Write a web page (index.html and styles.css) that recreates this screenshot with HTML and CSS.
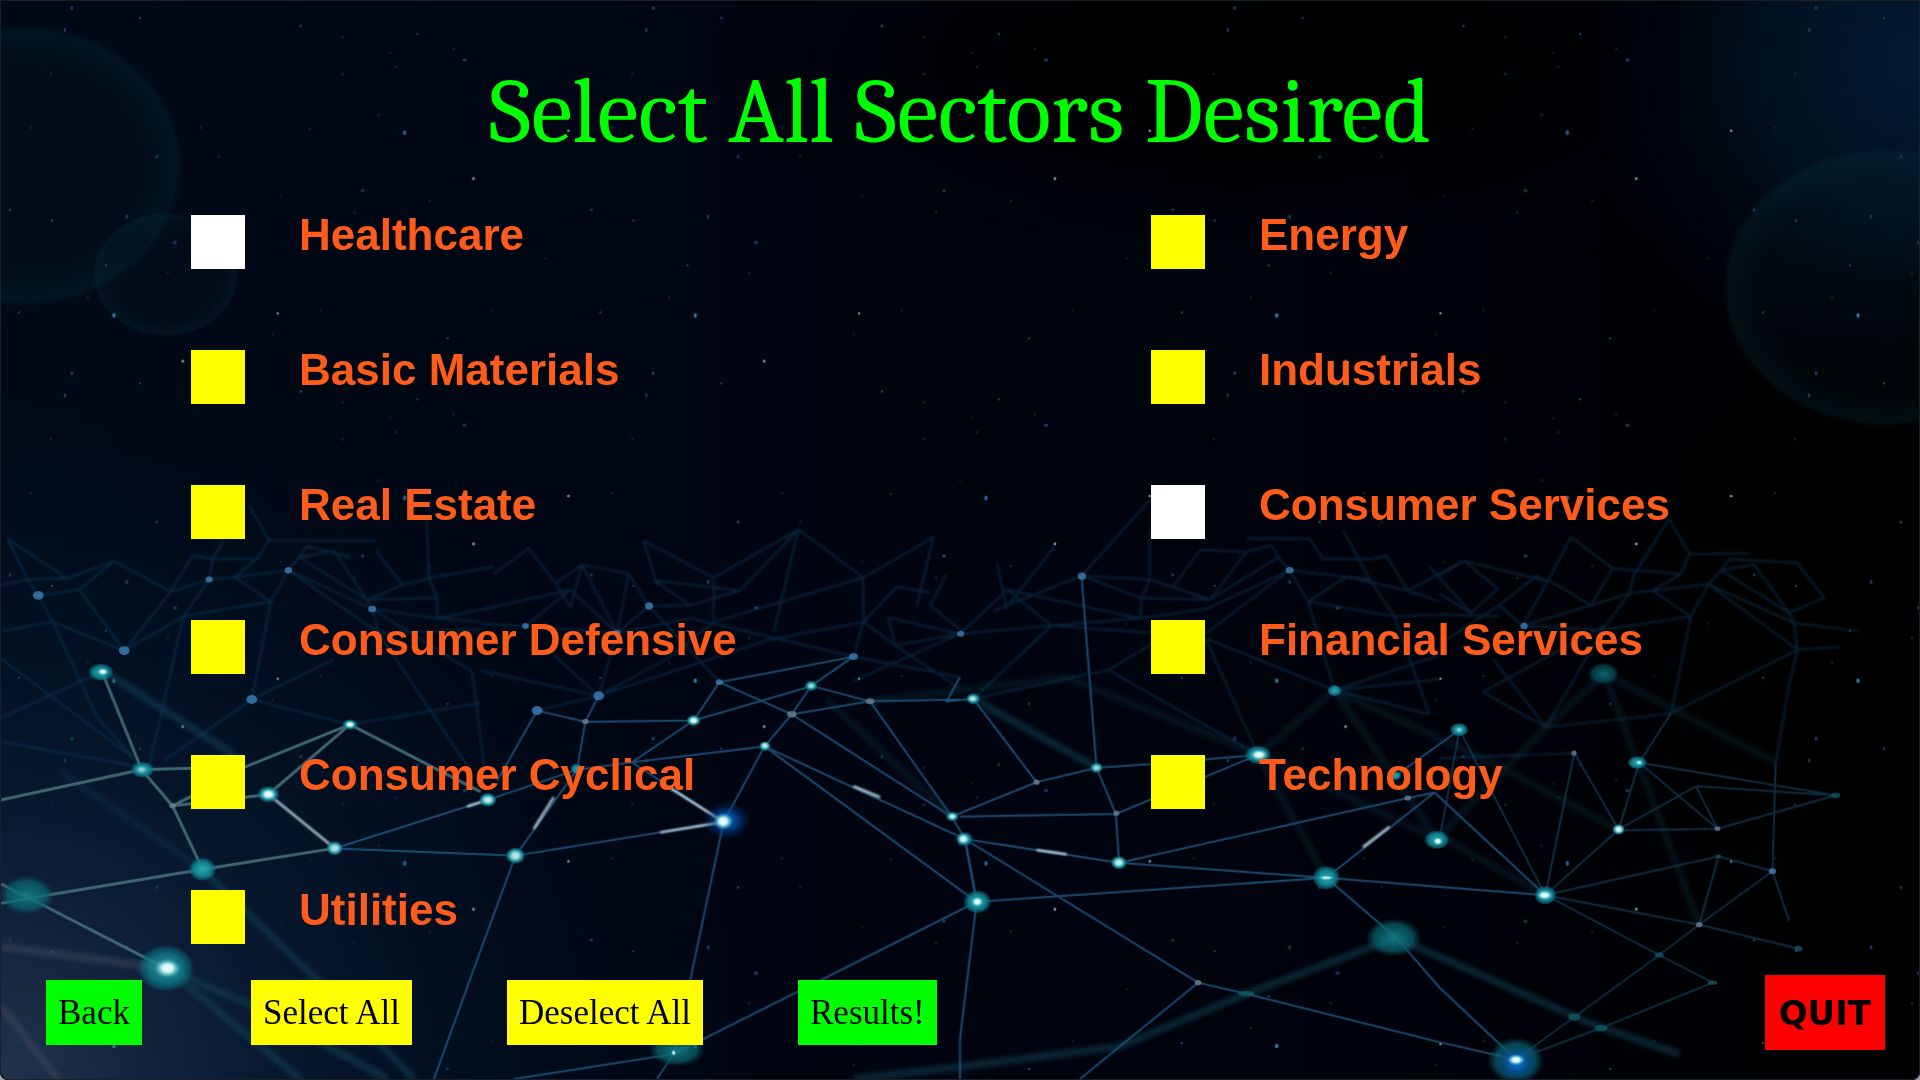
FILE: index.html
```html
<!DOCTYPE html>
<html lang="en">
<head>
<meta charset="utf-8">
<meta name="viewport" content="width=device-width, initial-scale=1">
<title>Select All Sectors Desired</title>
<link rel="stylesheet" href="styles.css">
</head>
<body>
<div class="screen">
  <svg class="backdrop" viewBox="0 0 1920 1080" preserveAspectRatio="none" aria-hidden="true">
    <defs>
      <linearGradient id="base" x1="0" y1="0" x2="1" y2="0">
        <stop offset="0" stop-color="#000a16"/>
        <stop offset=".3" stop-color="#000613"/>
        <stop offset=".7" stop-color="#00030b"/>
        <stop offset="1" stop-color="#000"/>
      </linearGradient>
      <radialGradient id="corner" gradientUnits="userSpaceOnUse" cx="0" cy="1080" r="760">
        <stop offset="0" stop-color="#22324b"/>
        <stop offset=".3" stop-color="#0a1c33"/>
        <stop offset=".65" stop-color="#021124" stop-opacity=".6"/>
        <stop offset="1" stop-color="#000a18" stop-opacity="0"/>
      </radialGradient>
      <radialGradient id="sky" gradientUnits="userSpaceOnUse" cx="1920" cy="60" r="340">
        <stop offset="0" stop-color="#031b34"/>
        <stop offset=".45" stop-color="#021427" stop-opacity=".8"/>
        <stop offset="1" stop-color="#000713" stop-opacity="0"/>
      </radialGradient>
      <radialGradient id="dark">
        <stop offset="0" stop-color="#000"/>
        <stop offset=".5" stop-color="#000" stop-opacity=".7"/>
        <stop offset="1" stop-color="#000" stop-opacity="0"/>
      </radialGradient>
      <radialGradient id="bubble">
        <stop offset="0" stop-color="#063038" stop-opacity=".06"/>
        <stop offset=".75" stop-color="#063038" stop-opacity=".1"/>
        <stop offset=".96" stop-color="#07363f" stop-opacity=".26"/>
        <stop offset="1" stop-color="#07363f" stop-opacity="0"/>
      </radialGradient>
      <radialGradient id="teal">
        <stop offset="0" stop-color="#2fa6b0"/>
        <stop offset=".6" stop-color="#128a98" stop-opacity=".9"/>
        <stop offset=".85" stop-color="#0b6b7c" stop-opacity=".65"/>
        <stop offset="1" stop-color="#0b5b6c" stop-opacity="0"/>
      </radialGradient>
      <radialGradient id="haze">
        <stop offset="0" stop-color="#12808a" stop-opacity=".9"/>
        <stop offset=".7" stop-color="#0b6470" stop-opacity=".7"/>
        <stop offset="1" stop-color="#0a4a5a" stop-opacity="0"/>
      </radialGradient>
      <radialGradient id="core">
        <stop offset="0" stop-color="#fff"/>
        <stop offset=".4" stop-color="#c8f4f4"/>
        <stop offset="1" stop-color="#1ba9bb" stop-opacity="0"/>
      </radialGradient>
      <radialGradient id="flare">
        <stop offset="0" stop-color="#0a7ee0"/>
        <stop offset=".5" stop-color="#0548a8" stop-opacity=".6"/>
        <stop offset="1" stop-color="#02204c" stop-opacity="0"/>
      </radialGradient>
      <pattern id="stars" width="582" height="366" patternUnits="userSpaceOnUse">
        <g fill="#163f5e">
          <ellipse cx="71" cy="7" rx="1.5" ry="2"/><circle cx="139" cy="17" r="1.3"/><ellipse cx="64" cy="29" rx="1.2" ry="2"/>
          <circle cx="300" cy="25" r="1.5"/><circle cx="417" cy="33" r="1.3"/><ellipse cx="464" cy="59" rx="2" ry="1.5"/>
          <circle cx="362" cy="190" r="1.7"/><ellipse cx="126" cy="216" rx="1.5" ry="2"/><ellipse cx="174" cy="242" rx="2" ry="1.7"/>
          <circle cx="156" cy="156" r="1.5"/><circle cx="9" cy="209" r="1.5"/><circle cx="105" cy="265" r="1.3"/>
          <circle cx="447" cy="338" r="1.3"/><circle cx="18" cy="312" r="1.3"/>
        </g>
        <g fill="#0a2638">
          <circle cx="342" cy="36" r="1.2"/><circle cx="453" cy="48" r="1.2"/><circle cx="342" cy="73" r="1.6"/><circle cx="200" cy="127" r="1.2"/>
          <circle cx="309" cy="128" r="1.2"/><circle cx="378" cy="114" r="1.2"/><circle cx="354" cy="212" r="1.3"/><circle cx="167" cy="272" r="1.3"/>
          <circle cx="320" cy="310" r="1.3"/><circle cx="87" cy="297" r="1.2"/><circle cx="272" cy="334" r="1.3"/><circle cx="30" cy="127" r="1.2"/>
          <circle cx="218" cy="156" r="1.2"/><circle cx="429" cy="200" r="1.2"/><circle cx="395" cy="66" r="1.2"/><circle cx="390" cy="52" r="1"/>
          <circle cx="280" cy="196" r="1"/><circle cx="491" cy="310" r="1"/><circle cx="545" cy="258" r="1"/><circle cx="50" cy="73" r="1.2"/>
        </g>
        <ellipse cx="404" cy="132" rx="1.7" ry="2.4" fill="#24618f"/>
        <ellipse cx="113" cy="315" rx="1.7" ry="2.2" fill="#2f7ba6"/>
        <g fill="#7f9a9f"><circle cx="473" cy="178" r="1.4"/><circle cx="277" cy="313" r="1.2"/><circle cx="182" cy="361" r="1.4"/><circle cx="568" cy="130" r="1.3"/><circle cx="51" cy="220" r="1" opacity=".5"/></g>
      </pattern>
    </defs>

    <rect width="1920" height="1080" fill="url(#base)"/>
    <rect width="1920" height="1080" fill="url(#corner)"/>
    <ellipse cx="1220" cy="60" rx="520" ry="200" fill="url(#dark)"/>
    <rect width="1920" height="1080" fill="url(#sky)"/>
    <ellipse cx="1900" cy="640" rx="320" ry="330" fill="url(#dark)"/>
    <ellipse cx="24" cy="165" rx="158" ry="141" fill="url(#bubble)"/>
    <ellipse cx="165" cy="274" rx="73" ry="62" fill="url(#bubble)"/>
    <ellipse cx="1886" cy="287" rx="163" ry="140" fill="url(#bubble)"/>
    <rect width="1920" height="1080" fill="url(#stars)"/>

    <g class="mesh" transform="translate(0 500) scale(.33333 .3699)">
      <g class="far">
        <path d="M20 105L80 215L112 258L155 330L290 590L420 720M0 230L80 215L200 212L340 165M112 258L235 243L340 165L510 248L370 408L235 243M510 248L575 150L635 160L770 158L805 108L745 15M805 108L1125 110M510 248L625 215L700 208L863 190L895 155L1000 138M625 215L548 315L370 408L155 330L0 355M548 315L810 275L700 208M810 275L863 190L1115 295M863 190L1135 360M548 315L445 720M810 275L753 540M753 540L1000 430M753 540L490 705M895 155L920 125L1050 155M1000 138L1100 270L1115 295L1310 320L1440 330M1100 270L1310 265L1285 212L1278 50M1310 265V320L1440 297M1125 135L1205 230L1100 270M1205 230L1285 212L1480 180M1115 295L1135 360L1440 350M1135 360L1400 720M1115 295L1415 465L1450 720M635 160L625 215M670 110L635 160M895 155L1100 270M0 430L400 700M0 655L400 720M0 590L300 466M753 540L1048 608L1440 550M700 208L770 158M20 105L200 212"/>
        <path transform="translate(1440)" d="M0 297L270 243L135 341L0 335M270 243L410 360L355 530M135 341L410 360L630 320M506 287L410 360M506 287L717 493M355 530L220 420M355 530L560 430L700 330L1150 210M355 530L860 380L1150 330L1245 393L1440 362M630 320L1120 424L1150 330V210L955 80L700 210V330M955 80L780 245L630 285L520 217L780 245M955 80L880 360M1150 210L1360 100L1310 290M490 110L700 210M490 110L530 230M506 287L630 285M445 200L410 360M445 200L506 287M305 175L410 360M305 175L225 225L270 290L305 175M145 130L225 225M145 130L40 200M1225 318L1245 393L1440 510M1225 318L1440 362M1120 424L1440 480M1400 200L1350 285L1440 350M1440 362L1120 490M1150 330L1250 235L1350 250M0 462L355 530L170 570M305 175L445 200"/>
        <path transform="translate(2880)" d="M0 362L142 243L275 340L40 538M142 243L540 320L740 295L990 190M0 362L275 340L575 360M275 340L540 320L545 265L570 215L750 270L545 265M750 270L860 140L935 122L955 155L990 190L740 360M570 215L640 235L720 135L860 140M640 235L750 270L955 155M365 205L570 215V80M365 205L545 265M365 205L570 0M365 205L100 300M110 170L140 290L285 125M990 190L1045 275L1125 515L740 375M1045 275L1160 208L990 190M1160 208L1345 245L1510 165M1045 275L1305 315L1440 310M1305 315L1230 215L1150 80M1160 208L1230 215M1050 105L1090 160L1230 160L1280 150L1345 245M1050 105H860M1305 315L1410 580M40 538L445 460L575 390M1125 515L1440 485M1125 515L1440 420M1125 515L1410 580M445 460L895 690M740 380L895 690M1345 245L1440 275"/>
        <path transform="translate(4320)" d="M395 100L325 220L250 340M395 100L520 185L455 285L325 215M690 50L750 145H930M690 50L585 200L570 253L490 350L320 615M520 185L725 200L750 145M250 340L455 285L570 253L640 245L808 228L1075 405L1065 333L808 228M640 245L755 315L695 578M755 315L808 228L845 190L945 175L1050 305L1065 333M845 190L1050 305M250 340L490 352L755 315M250 340L180 285L290 205L325 220M640 245L725 200M0 205L75 165L175 240L95 305L0 255M75 165L325 220M0 310L180 315M845 190L870 160L1075 170L1155 265L1050 305M1065 333L1260 355M1075 405L1200 398M130 520L495 340M130 520L320 615L160 430M0 700L405 685M695 578L320 615M695 578L1075 405L1050 500L1010 710M0 390L180 285M-30 180L95 305"/>
      </g>
      <g class="wide">
        <path d="M320 470L700 690M605 1000L950 1300L1240 1568M495 1268L760 1370L1160 1568M495 1268L900 1568"/>
        <path class="ash" d="M0 1210L495 1268M0 1370L170 1568"/>
        <path class="dim" d="M170 730L605 1000M2480 540L2855 857M2610 545L3200 480L3780 690"/>
        <path transform="translate(2880)" d="M1310 1185L860 1337L480 1480L0 1535L-320 1568M40 538L410 725M1310 1185L1900 1420L2160 1500"/>
        <path class="dim" transform="translate(2880)" d="M1100 1023L895 690L1125 515L1435 920"/>
        <path class="dim" transform="translate(4320)" d="M495 470L780 1150M495 470L1010 710M495 470L320 615L0 910L318 1070M130 700L538 892M-540 690L-5 920M-315 515L130 700"/>
      </g>
      <g class="near">
        <path class="grey" d="M304 466L422 730L515 828L605 1000M0 812L422 730L735 722L1048 608L803 797L515 828L600 790L735 722M1002 943L605 1000L85 1078L0 1092M0 1040L85 1078L495 1268M1048 608L1440 790"/>
        <path d="M1002 943L1462 812M1002 943L1545 963L1440 1220L1300 1568"/>
        <path transform="translate(1440)" d="M22 812L290 730L455 710L853 667M290 730L105 963L730 872L455 710L640 597M853 667L730 872L630 1300L580 1500L530 1568M315 600L290 730M50 760L170 570L315 600L640 597L717 493L1120 424L993 503M315 600L355 530M853 667L935 580L993 503L1170 545L935 580L1415 857L1170 545M1455 918L853 667L1490 1088M717 493L935 580M640 597L990 505M1170 545L1440 540M1415 857L1455 918L1490 1088L580 1500L100 1568M1415 857L1670 764"/>
        <path transform="translate(2880)" d="M40 538L230 764L410 725L575 715L895 690L468 850L410 725L365 205M468 850L0 857M468 850L478 982M15 918L478 982L1100 1023L50 1088L15 918M50 1088L0 1460V1568M478 982L1345 807L1425 792L1100 1023L1310 1185L1440 1320L1670 1515M15 918L715 1307L860 1337L1440 1468L1670 1515M715 1307L360 1568M1100 1023L1758 1070L1425 792M0 480L-40 545L40 538M1310 745L1500 622"/>
        <path class="soft" transform="translate(4320)" d="M60 622L318 1070M60 622L0 920M318 1070L405 685L538 892L318 1070M538 892L600 711L695 578M600 711L835 890L538 895M600 711L1190 800L835 890M318 1070L838 965L1000 1005L780 1150L318 1070L660 1232L820 1307M838 965L780 1150L660 1232L405 1400L230 1515L485 1430L820 1307M1000 1005L1010 710M1000 1005L1050 1140M780 1150L1078 1215M770 775L538 892M770 775L835 890M770 775L1190 800"/>
      </g>
      <g class="spark">
        <path d="M803 797L1002 943M1462 812L1400 830M1600 890L1660 805M1980 900L2170 872L2010 780M2560 775L2640 805M3110 948L3200 959M4090 940L4170 885"/>
      </g>

      <g fill="#3c78b0" opacity=".85">
        <ellipse cx="112" cy="258" rx="16" ry="12"/><ellipse cx="370" cy="408" rx="16" ry="12"/><ellipse cx="625" cy="215" rx="11" ry="8"/>
        <ellipse cx="863" cy="190" rx="11" ry="9"/><ellipse cx="1115" cy="295" rx="12" ry="9"/><ellipse cx="753" cy="540" rx="16" ry="12"/>
        <ellipse cx="1575" cy="341" rx="10" ry="8"/><ellipse cx="1850" cy="360" rx="11" ry="8"/><ellipse cx="1946" cy="287" rx="12" ry="10"/>
        <ellipse cx="1795" cy="530" rx="16" ry="12"/><ellipse cx="1610" cy="570" rx="16" ry="12"/><ellipse cx="2157" cy="493" rx="11" ry="8"/>
        <ellipse cx="2560" cy="424" rx="13" ry="9"/><ellipse cx="2882" cy="362" rx="11" ry="8"/><ellipse cx="3246" cy="206" rx="12" ry="10"/>
        <ellipse cx="3870" cy="190" rx="12" ry="9"/><ellipse cx="4574" cy="341" rx="11" ry="9"/><ellipse cx="5320" cy="1005" rx="11" ry="8"/>
      </g>
      <g fill="#6a8190" opacity=".8">
        <ellipse cx="515" cy="828" rx="10" ry="7"/><ellipse cx="1755" cy="600" rx="10" ry="7"/><ellipse cx="2375" cy="580" rx="14" ry="9"/><ellipse cx="2610" cy="545" rx="13" ry="8"/>
        <ellipse cx="3110" cy="764" rx="9" ry="7"/><ellipse cx="3350" cy="848" rx="9" ry="7"/><ellipse cx="3595" cy="1307" rx="10" ry="7"/><ellipse cx="4225" cy="807" rx="10" ry="7"/>
        <ellipse cx="5155" cy="890" rx="9" ry="6"/><ellipse cx="5100" cy="1150" rx="10" ry="7"/><ellipse cx="4724" cy="685" rx="8" ry="7"/>
      </g>
      <g fill="#0f5662" opacity=".8">
        <ellipse cx="5510" cy="800" rx="14" ry="7"/><ellipse cx="5398" cy="1215" rx="12" ry="8"/><ellipse cx="4725" cy="1400" rx="18" ry="10"/><ellipse cx="4805" cy="1430" rx="20" ry="9"/>
        <ellipse cx="4980" cy="1232" rx="13" ry="7"/><ellipse cx="5140" cy="1307" rx="14" ry="6"/><ellipse cx="5158" cy="965" rx="8" ry="5"/><ellipse cx="3740" cy="1337" rx="24" ry="8"/>
      </g>
      <g fill="url(#teal)">
        <ellipse cx="300" cy="466" rx="38" ry="24"/><ellipse cx="425" cy="730" rx="36" ry="22"/><ellipse cx="605" cy="1000" rx="42" ry="32"/>
        <ellipse cx="495" cy="1268" rx="86" ry="64" opacity=".8"/><ellipse cx="803" cy="797" rx="34" ry="23"/><ellipse cx="1048" cy="608" rx="23" ry="15"/>
        <ellipse cx="1002" cy="943" rx="25" ry="20"/><ellipse cx="1545" cy="963" rx="30" ry="23"/><ellipse cx="1462" cy="812" rx="27" ry="20"/>
        <ellipse cx="1728" cy="728" rx="18" ry="15"/><ellipse cx="2080" cy="597" rx="22" ry="16"/><ellipse cx="2433" cy="503" rx="20" ry="15"/>
        <ellipse cx="2294" cy="667" rx="18" ry="14"/><ellipse cx="2857" cy="857" rx="20" ry="14"/><ellipse cx="2893" cy="918" rx="26" ry="20"/>
        <ellipse cx="2932" cy="1088" rx="42" ry="32"/><ellipse cx="2920" cy="538" rx="22" ry="16"/><ellipse cx="3290" cy="725" rx="20" ry="15"/>
        <ellipse cx="3357" cy="982" rx="25" ry="19"/><ellipse cx="3775" cy="690" rx="40" ry="26"/><ellipse cx="3980" cy="1023" rx="42" ry="33"/>
        <ellipse cx="4005" cy="516" rx="22" ry="16"/><ellipse cx="4188" cy="746" rx="18" ry="13"/><ellipse cx="4312" cy="920" rx="38" ry="26"/>
        <ellipse cx="4379" cy="622" rx="28" ry="19"/><ellipse cx="4638" cy="1070" rx="34" ry="26"/><ellipse cx="4858" cy="892" rx="19" ry="15"/><ellipse cx="4914" cy="711" rx="30" ry="18"/>
      </g>
      <g fill="url(#haze)">
        <ellipse cx="78" cy="1070" rx="84" ry="54"/><ellipse cx="2030" cy="1490" rx="84" ry="44"/><ellipse cx="4182" cy="1185" rx="84" ry="52"/><ellipse cx="4812" cy="470" rx="48" ry="30" opacity=".8"/>
        <ellipse cx="4549" cy="1518" rx="86" ry="64"/>
      </g>
      <ellipse cx="2180" cy="868" rx="74" ry="54" fill="url(#flare)"/>
      <ellipse cx="4552" cy="1524" rx="66" ry="52" fill="url(#flare)"/>
      <g fill="url(#core)">
        <ellipse cx="306" cy="465" rx="18" ry="11"/><ellipse cx="500" cy="1268" rx="42" ry="28"/><ellipse cx="803" cy="797" rx="27" ry="18"/><ellipse cx="1048" cy="608" rx="18" ry="11"/>
        <ellipse cx="1002" cy="943" rx="24" ry="18" opacity=".7"/><ellipse cx="1545" cy="963" rx="26" ry="20" opacity=".75"/><ellipse cx="1462" cy="812" rx="24" ry="16" opacity=".8"/>
        <ellipse cx="2169" cy="870" rx="30" ry="24"/><ellipse cx="2080" cy="597" rx="19" ry="13"/><ellipse cx="2433" cy="503" rx="16" ry="11" opacity=".6"/><ellipse cx="2294" cy="665" rx="16" ry="12" opacity=".8"/>
        <ellipse cx="2857" cy="857" rx="16" ry="11" opacity=".8"/><ellipse cx="2890" cy="918" rx="20" ry="16" opacity=".9"/><ellipse cx="2932" cy="1088" rx="20" ry="15"/><ellipse cx="2918" cy="538" rx="18" ry="12" opacity=".7"/>
        <ellipse cx="3290" cy="725" rx="17" ry="12" opacity=".6"/><ellipse cx="3357" cy="982" rx="22" ry="16" opacity=".8"/><ellipse cx="3778" cy="690" rx="28" ry="16"/><ellipse cx="3980" cy="1023" rx="26" ry="7" opacity=".8"/>
        <ellipse cx="4315" cy="924" rx="16" ry="12"/><ellipse cx="4379" cy="622" rx="14" ry="10" opacity=".5"/><ellipse cx="4636" cy="1070" rx="26" ry="14"/><ellipse cx="4858" cy="892" rx="18" ry="14" opacity=".9"/>
        <ellipse cx="4920" cy="711" rx="12" ry="8" opacity=".8"/><ellipse cx="4550" cy="1516" rx="28" ry="16"/><ellipse cx="2020" cy="1497" rx="8" ry="9" opacity=".8"/><ellipse cx="422" cy="730" rx="20" ry="12" opacity=".5"/>
      </g>
    </g>
  </svg>

  <main class="panel">
    <h1 class="title">Select All Sectors Desired</h1>
    <form class="form">
      <div class="sectors">
        <label class="sector"><input class="tick" type="checkbox" checked>Healthcare</label>
        <label class="sector"><input class="tick" type="checkbox">Basic Materials</label>
        <label class="sector"><input class="tick" type="checkbox">Real Estate</label>
        <label class="sector"><input class="tick" type="checkbox">Consumer Defensive</label>
        <label class="sector"><input class="tick" type="checkbox">Consumer Cyclical</label>
        <label class="sector"><input class="tick" type="checkbox">Utilities</label>
        <label class="sector"><input class="tick" type="checkbox">Energy</label>
        <label class="sector"><input class="tick" type="checkbox">Industrials</label>
        <label class="sector"><input class="tick" type="checkbox" checked>Consumer Services</label>
        <label class="sector"><input class="tick" type="checkbox">Financial Services</label>
        <label class="sector"><input class="tick" type="checkbox">Technology</label>
      </div>
      <div class="actions">
        <button class="btn btn-go btn-back" type="button">Back</button>
        <button class="btn btn-pick" type="button">Select All</button>
        <button class="btn btn-pick" type="button">Deselect All</button>
        <button class="btn btn-go" type="submit">Results!</button>
        <button class="btn-quit" type="button">QUIT</button>
      </div>
    </form>
  </main>
</div>
</body>
</html>
```
FILE: styles.css
```css
* { box-sizing: border-box; }

body {
  margin: 0;
  background: #9aa3ad;
}

.screen {
  position: relative;
  min-height: 100vh;
  overflow: hidden;
  background: #00030b;
  border-radius: 0 0 8px 8px;
  box-shadow: inset 0 0 0 1px #1b2028;
}

.backdrop {
  position: absolute;
  inset: 1px;
  width: calc(100% - 2px);
  height: calc(100% - 2px);
  border-radius: 0 0 8px 8px;
}

.mesh path {
  fill: none;
  vector-effect: non-scaling-stroke;
}

.far { opacity: 0.5; filter: blur(3px); }
.far path { stroke: #14466c; stroke-width: 2px; }

.wide { filter: blur(7px); }
.wide path { stroke: #15485c; stroke-width: 7px; opacity: 0.55; }
.wide .ash { stroke: #434c60; }
.wide .dim { opacity: 0.25; }

.near { filter: blur(2px); }
.near path { stroke: #1f5884; stroke-width: 2px; opacity: 0.85; }
.near .grey { stroke: #4a7480; stroke-width: 3px; }
.near .soft { stroke: #164763; opacity: 0.65; }

.spark { filter: blur(3px); }
.spark path { stroke: #d8f2f8; stroke-width: 2px; }

.panel {
  position: relative;
  display: flex;
  flex-direction: column;
  min-height: 100vh;
  padding: 62px 0 30px;
}

.title {
  margin: 0 0 53px;
  color: #00ff00;
  font: 400 93px/100px Cambria, Caladea, "Liberation Serif", serif;
  text-align: center;
}

.form {
  display: flex;
  flex: 1;
  flex-direction: column;
  justify-content: space-between;
}

.sectors {
  display: grid;
  grid-template-columns: 1fr 1fr;
  grid-template-rows: repeat(6, 54px);
  grid-auto-flow: column;
  row-gap: 81px;
}

.sector {
  display: flex;
  align-items: flex-start;
  gap: 54px;
  padding-left: 191px;
  color: #ff5c1c;
  font: 700 44px/40px "Liberation Sans", sans-serif;
}

.tick {
  appearance: none;
  flex: none;
  width: 54px;
  height: 54px;
  margin: 0;
  background: #ffff00;
}

.tick:checked { background: #fff; }

.actions {
  display: flex;
  align-items: flex-end;
  gap: 95px;
  padding: 0 35px 0 46px;
}

.btn {
  height: 65px;
  margin: 0 0 5px;
  padding: 0 12px;
  border: 0;
  color: #000;
  font: 400 35px/40px "Liberation Serif", serif;
}

.btn-go { background: #00ff00; }
.btn-pick { background: #ffff00; }
.btn-back { margin-right: 14px; }

.btn-quit {
  height: 75px;
  margin-left: auto;
  padding: 0 14px;
  border: 0;
  background: #ff0000;
  color: #000;
  font: 700 34px/40px "DejaVu Sans", sans-serif;
}
```
